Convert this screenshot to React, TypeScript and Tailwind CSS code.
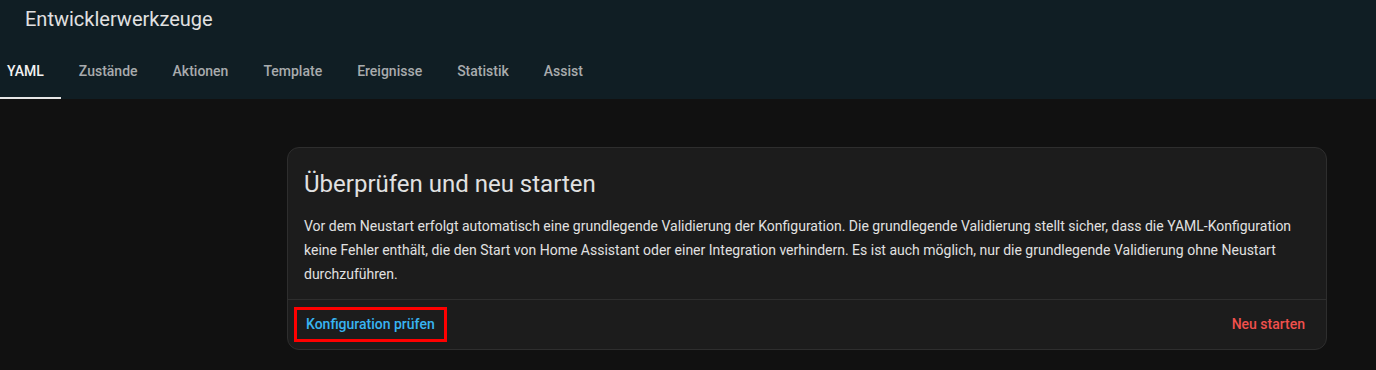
const tabs = ["YAML", "Zustände", "Aktionen", "Template", "Ereignisse", "Statistik", "Assist"];

export default function App() {
  return (
    <div className="min-h-[370px] bg-[#111111] font-['Roboto',sans-serif] text-[#e1e1e1]">
      <header className="bg-[#101e24]">
        <div className="h-[47px] pl-[25px] pt-[5px] text-[20px] leading-[28px] text-[#e1e1e1]">
          Entwicklerwerkzeuge
        </div>
        <nav className="-ml-[10.5px] flex">
          {tabs.map((t, i) => (
            <div key={t} className="flex flex-col">
              <span
                className={
                  "px-[17.5px] pt-[14px] pb-[16px] text-[14px] leading-[20px] font-medium " +
                  (i === 0 ? "text-[#f2f2f2]" : "text-[#a8abad]")
                }
              >
                {t}
              </span>
              <span className={"h-[2px] " + (i === 0 ? "bg-[#e6e6e6]" : "bg-transparent")} />
            </div>
          ))}
        </nav>
      </header>

      <main className="pt-[48px] pl-[287px]">
        <div className="w-[1040px] rounded-[12px] border border-[#2e2e2e] bg-[#1c1c1c]">
          <h1 className="px-4 pt-[20px] pb-[14px] text-[24px] leading-[32px] font-normal text-[#e1e1e1]">
            Überprüfen und neu starten
          </h1>
          <p className="px-4 pb-[13px] text-[14px] leading-[24px] text-[#e1e1e1]">
            Vor dem Neustart erfolgt automatisch eine grundlegende Validierung der Konfiguration. Die grundlegende
            Validierung stellt sicher, dass die YAML-Konfiguration keine Fehler enthält, die den Start von Home
            Assistant oder einer Integration verhindern. Es ist auch möglich, nur die grundlegende Validierung ohne
            Neustart durchzuführen.
          </p>
          <div className="flex h-[50px] items-center justify-between border-t border-[#2e2e2e] pl-[6px] pr-[8px]">
            <button className="h-[35px] border-[3px] border-[#ff0000] px-[9px] text-[14px] font-medium text-[#38b4f2]">
              Konfiguration prüfen
            </button>
            <button className="h-[35px] px-[13px] text-[14px] font-medium text-[#f0504c]">Neu starten</button>
          </div>
        </div>
      </main>
    </div>
  );
}
